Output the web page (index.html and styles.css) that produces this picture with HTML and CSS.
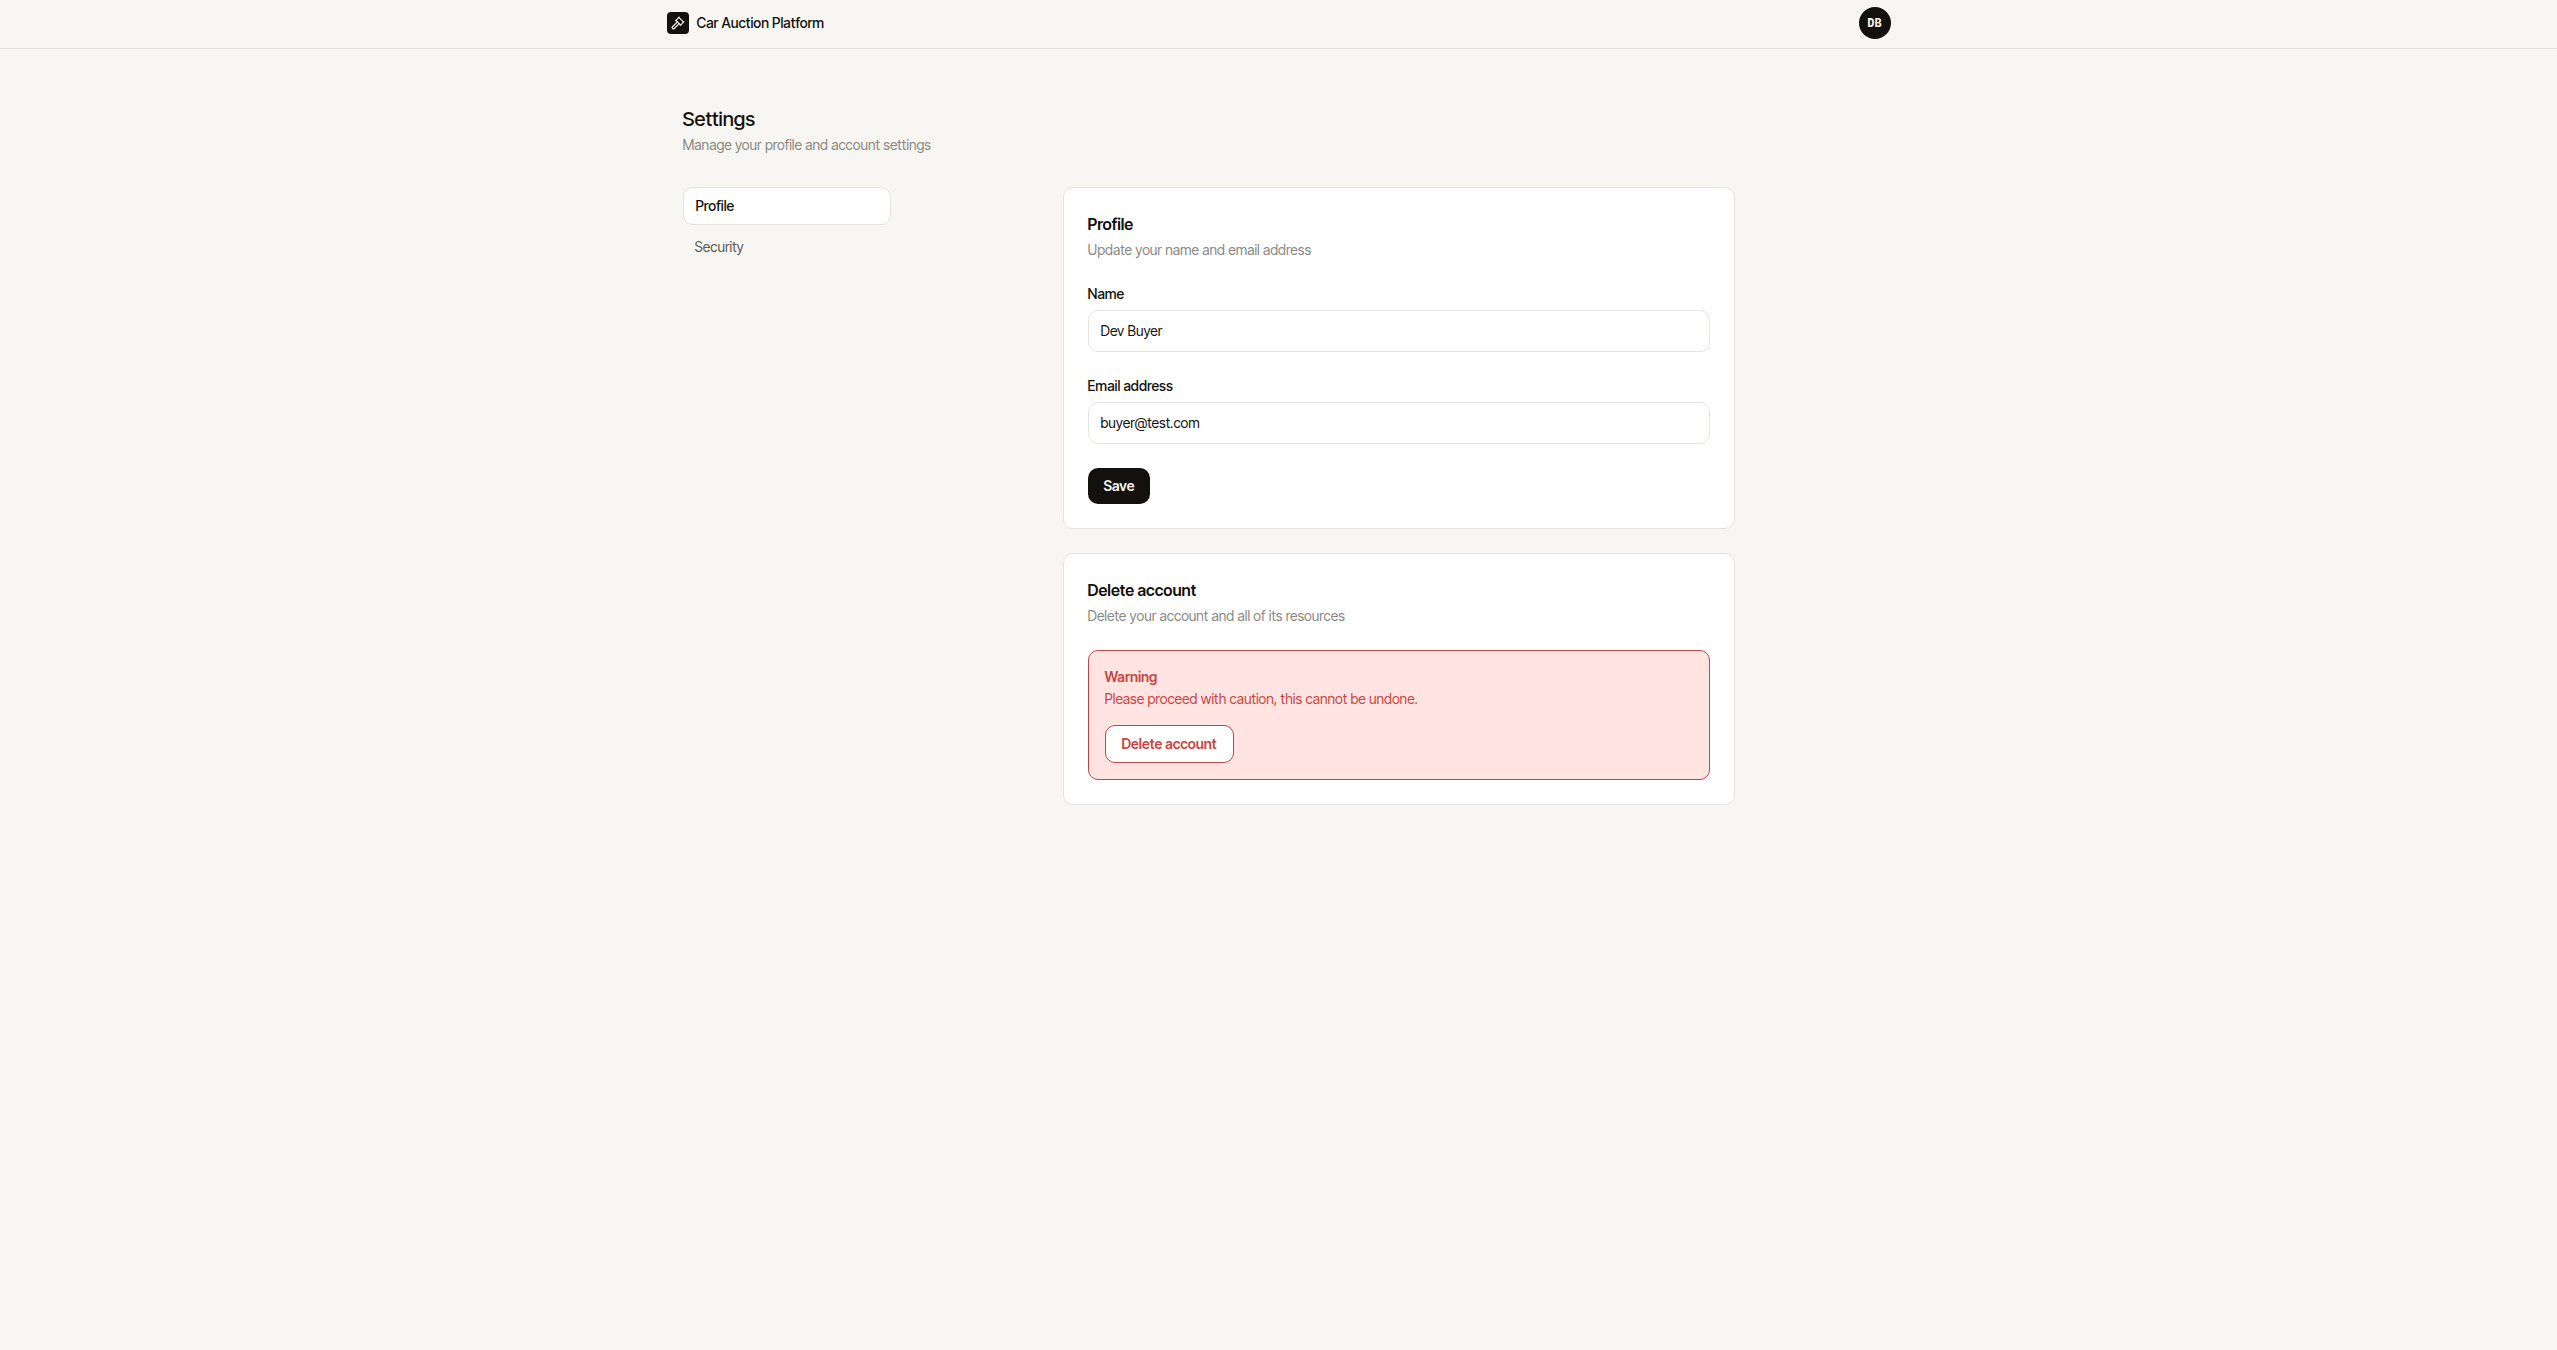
FILE: index.html
```html
<!DOCTYPE html>
<html lang="en">
<head>
  <meta charset="UTF-8">
  <meta name="viewport" content="width=device-width, initial-scale=1.0">
  <title>Settings - Car Auction Platform</title>
  <link rel="stylesheet" href="styles.css">
</head>
<body>

  <header class="topbar">
    <div class="topbar-inner">
      <a class="brand" href="#">
        <span class="brand-icon">
          <svg viewBox="0 0 24 24" fill="none" stroke="currentColor" stroke-width="2" stroke-linecap="round" stroke-linejoin="round" aria-hidden="true">
            <path d="m14 13-8.381 8.38a1 1 0 0 1-3.001-3l8.384-8.381"/>
            <path d="m16 16 6-6"/>
            <path d="m21.5 10.5-8-8"/>
            <path d="m8 8 6-6"/>
            <path d="m8.5 7.5 8 8"/>
          </svg>
        </span>
        <span>Car Auction Platform</span>
      </a>
      <button class="avatar" type="button" aria-label="Account menu">DB</button>
    </div>
  </header>

  <main class="page">
    <div class="page-head">
      <h1>Settings</h1>
      <p>Manage your profile and account settings</p>
    </div>

    <div class="layout">
      <nav class="side-nav" aria-label="Settings">
        <a class="active" href="#profile">Profile</a>
        <a href="#security">Security</a>
      </nav>

      <div class="content">
        <section class="card" id="profile">
          <div class="card-head">
            <h2>Profile</h2>
            <p>Update your name and email address</p>
          </div>
          <form class="form">
            <div class="field">
              <label for="name">Name</label>
              <input type="text" id="name" value="Dev Buyer">
            </div>
            <div class="field">
              <label for="email">Email address</label>
              <input type="email" id="email" value="buyer@test.com">
            </div>
            <button class="btn btn-primary" type="submit">Save</button>
          </form>
        </section>

        <section class="card">
          <div class="card-head">
            <h2>Delete account</h2>
            <p>Delete your account and all of its resources</p>
          </div>
          <div class="warning">
            <strong>Warning</strong>
            <p>Please proceed with caution, this cannot be undone.</p>
            <button class="btn btn-danger" type="button">Delete account</button>
          </div>
        </section>
      </div>
    </div>
  </main>

</body>
</html>
```

FILE: styles.css
```css
* {
  box-sizing: border-box;
}

body {
  margin: 0;
  font-family: "Inter Tight", Inter, sans-serif;
  font-size: 14px;
  line-height: 20px;
  color: #12110e;
  background: #f7f6f2;
}

h1, h2, p {
  margin: 0;
}

a {
  color: inherit;
  text-decoration: none;
}

.topbar {
  border-bottom: 1px solid #e2e1dc;
}

.topbar-inner {
  max-width: 1280px;
  margin: 0 auto;
  padding: 7px 28px 9px;
  display: flex;
  justify-content: space-between;
  align-items: center;
}

.brand {
  display: flex;
  align-items: center;
  gap: 8px;
  font-weight: 500;
}

.brand-icon {
  width: 22px;
  height: 22px;
  border-radius: 4px;
  background: #12110e;
  color: #f8f7f3;
  display: flex;
  align-items: center;
  justify-content: center;
}

.brand-icon svg {
  width: 14px;
  height: 14px;
}

.avatar {
  width: 32px;
  height: 32px;
  padding: 0;
  border: none;
  border-radius: 50%;
  background: #12110e;
  color: #f8f7f3;
  font-family: "DejaVu Sans Mono", monospace;
  font-size: 12px;
  font-weight: bold;
  cursor: pointer;
}

.page {
  max-width: 1280px;
  margin: 0 auto;
  padding: 56px 44px;
}

.page-head {
  display: flex;
  flex-direction: column;
  gap: 2px;
  margin-bottom: 32px;
}

.page-head h1 {
  font-size: 20px;
  line-height: 28px;
  font-weight: 500;
}

.page-head p,
.card-head p {
  color: #8a8984;
}

.layout {
  display: flex;
  align-items: flex-start;
  gap: 32px;
}

.side-nav {
  width: 208px;
  display: flex;
  flex-direction: column;
  gap: 4px;
}

.side-nav a {
  padding: 8px 12px;
  border-radius: 10px;
  color: #5a5954;
}

.side-nav .active {
  background: #fff;
  border: 1px solid #e5e4df;
  color: #12110e;
  font-weight: 500;
}

.content {
  flex: 1;
  max-width: 672px;
  margin: 0 auto;
  display: flex;
  flex-direction: column;
  gap: 24px;
}

.card {
  padding: 24px;
  background: #fff;
  border: 1px solid #e5e4df;
  border-radius: 10px;
}

.card-head {
  display: flex;
  flex-direction: column;
  gap: 4px;
  margin-bottom: 24px;
}

.card-head h2 {
  font-size: 16px;
  line-height: 24px;
  font-weight: 600;
}

.form {
  display: flex;
  flex-direction: column;
  align-items: flex-start;
  gap: 24px;
}

.field {
  width: 100%;
  display: flex;
  flex-direction: column;
  gap: 6px;
}

.field label {
  font-weight: 500;
}

.field input {
  height: 42px;
  padding: 0 12px 1px;
  border: 1px solid #e5e4df;
  border-radius: 10px;
  background: #fff;
  color: #12110e;
  font: inherit;
}

.btn {
  padding: 8px 16px;
  border: none;
  border-radius: 10px;
  font: inherit;
  font-weight: 600;
  cursor: pointer;
}

.btn-primary {
  background: #12110e;
  color: #f8f7f3;
}

.btn-danger {
  margin-top: 16px;
  background: #fff;
  border: 1px solid #b84747;
  color: #c84545;
}

.warning {
  padding: 16px;
  border: 1px solid #b84747;
  border-radius: 10px;
  background: #ffe4e1;
  color: #c84545;
}

.warning strong {
  display: block;
  margin-bottom: 2px;
  font-weight: 600;
}
```
